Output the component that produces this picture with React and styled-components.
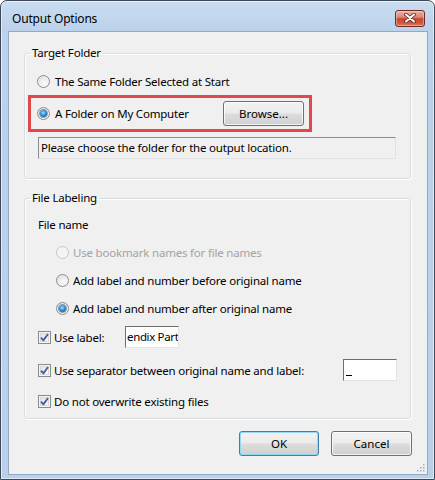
import React from 'react';
import styled, { createGlobalStyle, css } from 'styled-components';

const Global = createGlobalStyle`
  html, body { margin: 0; padding: 0; background: #ffffff; }
  body {
    font-family: "Noto Sans", "Open Sans", sans-serif;
    font-size: 11.5px;
    letter-spacing: -0.2px;
    color: #000;
  }
  *, *::before, *::after { box-sizing: border-box; }
`;

const Window = styled.div`
  width: 435px;
  height: 480px;
  border: 1px solid #3a4a5e;
  border-radius: 7px 7px 0 0;
  background: linear-gradient(180deg, #c9dcf0 0%, #bcd2eb 30px, #b9d0ea 100%);
  box-shadow: inset 0 0 0 1px rgba(255, 255, 255, 0.55);
  display: flex;
  flex-direction: column;
`;

const TitleBar = styled.div`
  height: 30px;
  padding: 4px 9px 0 11px;
  display: flex;
  align-items: center;
  justify-content: space-between;
`;

const Title = styled.span`
  font-size: 12px;
  color: #000;
`;

const CloseButton = styled.div`
  width: 30px;
  height: 17px;
  border: 1px solid #6b2a22;
  border-radius: 3px;
  background: linear-gradient(180deg, #ecb2a4 0%, #dc8574 42%, #c8452f 52%, #d0573f 80%, #e07a5c 100%);
  box-shadow: inset 0 0 0 1px rgba(255, 225, 215, 0.45);
  display: flex;
  align-items: center;
  justify-content: center;
`;

const Client = styled.div`
  position: relative;
  margin: 0 6px 0 7px;
  height: 444px;
  border: 1px solid #93a9c2;
  background: #f0f0f0;
  display: flex;
  flex-direction: column;
`;

const Group = styled.fieldset`
  margin: ${(p) => p.$top}px 0 0 15px;
  width: 387px;
  padding: 0 0 ${(p) => p.$pb}px 0;
  min-inline-size: 0;
  border: 1px solid #d5dfe5;
  border-radius: 3px;
  box-shadow: inset 1px 1px 0 #ffffff, 1px 1px 0 #ffffff;
  display: flex;
  flex-direction: column;
`;

const Legend = styled.legend`
  margin-left: 5px;
  padding: 0 2px;
  line-height: 16px;
`;

const Row = styled.div`
  height: ${(p) => p.$h || 20}px;
  margin-top: ${(p) => p.$mt || 0}px;
  padding-left: ${(p) => p.$pl || 0}px;
  padding-right: ${(p) => p.$pr || 0}px;
  display: flex;
  align-items: center;
  gap: ${(p) => (p.$gap === undefined ? 4 : p.$gap)}px;
`;

const Highlight = styled.div`
  margin: 4px 0 0 3px;
  width: 284px;
  height: 37px;
  border: 3px solid #e2474a;
  padding: 0 5px 0 6px;
  display: flex;
  align-items: center;
  gap: 5px;
`;

const Label = styled.span`
  color: ${(p) => (p.$disabled ? '#a3a3a3' : '#000')};
  white-space: nowrap;
  ${(p) => p.$w && css`width: ${p.$w}px;`}
`;

const Spacer = styled.span`
  flex: 1;
`;

const PathField = styled.div`
  margin: 5px 0 0 13px;
  width: 358px;
  height: 22px;
  padding-left: 2px;
  line-height: 20px;
  background: #f0f0f0;
  border: 1px solid;
  border-color: #8d8d8d #e2e2e2 #e2e2e2 #8d8d8d;
  white-space: nowrap;
`;

const TextBox = styled.div`
  width: 54px;
  height: 22px;
  padding-left: 1px;
  line-height: 20px;
  letter-spacing: -0.35px;
  background: #ffffff;
  border: 1px solid;
  border-color: #6e6e6e #e3e3e3 #e3e3e3 #6e6e6e;
  overflow: hidden;
  white-space: nowrap;
  ${(p) => p.$push && css`margin-left: auto;`}
`;

const Caret = styled.span`
  display: inline-block;
  width: 6px;
  height: 1px;
  background: #000;
  vertical-align: -2px;
  margin-left: 1px;
`;

const RadioCircle = styled.span`
  flex: none;
  width: 13px;
  height: 13px;
  border-radius: 50%;
  border: 1px solid ${(p) => (p.$disabled ? '#c6c6c6' : '#8a8b8b')};
  background: ${(p) =>
    p.$disabled
      ? '#f4f4f4'
      : 'radial-gradient(circle at 60% 65%, #fbfbfb 0%, #ececec 45%, #c9c9c9 100%)'};
  box-shadow: ${(p) => (p.$disabled ? 'none' : 'inset 0 0 0 1px rgba(255,255,255,0.5)')};
  display: flex;
  align-items: center;
  justify-content: center;
`;

const RadioDot = styled.span`
  width: 7px;
  height: 7px;
  border-radius: 50%;
  background: radial-gradient(circle at 45% 40%, #a6e4ff 0%, #3a9be0 40%, #115aa6 75%, #0b3f7e 100%);
  box-shadow: 0 0 0 1px rgba(25, 60, 105, 0.45);
`;

const CheckBox = styled.span`
  flex: none;
  width: 13px;
  height: 13px;
  border: 1px solid #8a8b8b;
  background: linear-gradient(135deg, #dcdcdc 0%, #f4f4f4 60%, #ffffff 100%);
  box-shadow: inset 0 0 0 1px #f5f5f5, inset 0 0 0 2px #d8d8d8;
  display: flex;
  align-items: center;
  justify-content: center;
`;

const Button = styled.button`
  width: ${(p) => p.$w}px;
  height: 25px;
  padding: 0;
  font: inherit;
  color: #000;
  border: 1px solid ${(p) => (p.$default ? '#3c7fb1' : '#707070')};
  border-radius: 3px;
  background: linear-gradient(180deg, #f2f2f2 0%, #ebebeb 48%, #dddddd 52%, #cfcfcf 100%);
  box-shadow: inset 0 0 0 1px ${(p) => (p.$default ? 'rgba(140, 215, 245, 0.9)' : 'rgba(255,255,255,0.75)')};
`;

const ButtonBar = styled.div`
  margin-top: 12px;
  padding-right: 15px;
  display: flex;
  justify-content: flex-end;
  gap: 12px;
`;

const Grip = styled.svg`
  position: absolute;
  right: 2px;
  bottom: 2px;
`;

function Radio({ checked, disabled }) {
  return (
    <RadioCircle $disabled={disabled}>{checked && <RadioDot />}</RadioCircle>
  );
}

function Check() {
  return (
    <CheckBox>
      <svg width="9" height="9" viewBox="0 0 9 9">
        <path d="M1 4.6 L3.4 7.4 L8 1" fill="none" stroke="#4b5f9a" strokeWidth="1.9" strokeLinejoin="round" />
      </svg>
    </CheckBox>
  );
}

export default function App() {
  return (
    <>
      <Global />
      <Window>
        <TitleBar>
          <Title>Output Options</Title>
          <CloseButton>
            <svg width="12" height="10" viewBox="0 0 12 10">
              <path d="M2 1.5 L10 8.5 M10 1.5 L2 8.5" stroke="#4a2a26" strokeWidth="3.6" strokeLinecap="round" />
              <path d="M2 1.5 L10 8.5 M10 1.5 L2 8.5" stroke="#ffffff" strokeWidth="2" strokeLinecap="round" />
            </svg>
          </CloseButton>
        </TitleBar>
        <Client>
          <Group $top={13} $pb={19}>
            <Legend>Target Folder</Legend>
            <Row $mt={10} $pl={12} $gap={5}>
              <Radio />
              <Label>The Same Folder Selected at Start</Label>
            </Row>
            <Highlight>
              <Radio checked />
              <Label>A Folder on My Computer</Label>
              <Spacer />
              <Button $w={81}>Browse...</Button>
            </Highlight>
            <PathField>Please choose the folder for the output location.</PathField>
          </Group>

          <Group $top={11} $pb={7}>
            <Legend>File Labeling</Legend>
            <Row $mt={10} $h={16} $pl={13}>
              <Label>File name</Label>
            </Row>
            <Row $mt={6} $h={28} $pl={31}>
              <Radio disabled />
              <Label $disabled>Use bookmark names for file names</Label>
            </Row>
            <Row $h={28} $pl={31}>
              <Radio />
              <Label>Add label and number before original name</Label>
            </Row>
            <Row $h={28} $pl={31}>
              <Radio checked />
              <Label>Add label and number after original name</Label>
            </Row>
            <Row $mt={4} $h={22} $pl={13} $gap={3}>
              <Check />
              <Label $w={68}>Use label:</Label>
              <TextBox>endix Part</TextBox>
            </Row>
            <Row $mt={11} $h={22} $pl={13} $pr={13} $gap={3}>
              <Check />
              <Label>Use separator between original name and label:</Label>
              <TextBox $push>
                <Caret />
              </TextBox>
            </Row>
            <Row $mt={10} $h={20} $pl={13} $gap={3}>
              <Check />
              <Label>Do not overwrite existing files</Label>
            </Row>
          </Group>

          <ButtonBar>
            <Button $w={80} $default>OK</Button>
            <Button $w={81}>Cancel</Button>
          </ButtonBar>

          <Grip width="9" height="9" viewBox="0 0 9 9">
            {[
              [7, 1], [7, 4], [4, 4], [7, 7], [4, 7], [1, 7],
            ].map(([x, y]) => (
              <rect key={`${x}-${y}`} x={x} y={y} width="1.5" height="1.5" fill="#a5acb5" />
            ))}
          </Grip>
        </Client>
      </Window>
    </>
  );
}
